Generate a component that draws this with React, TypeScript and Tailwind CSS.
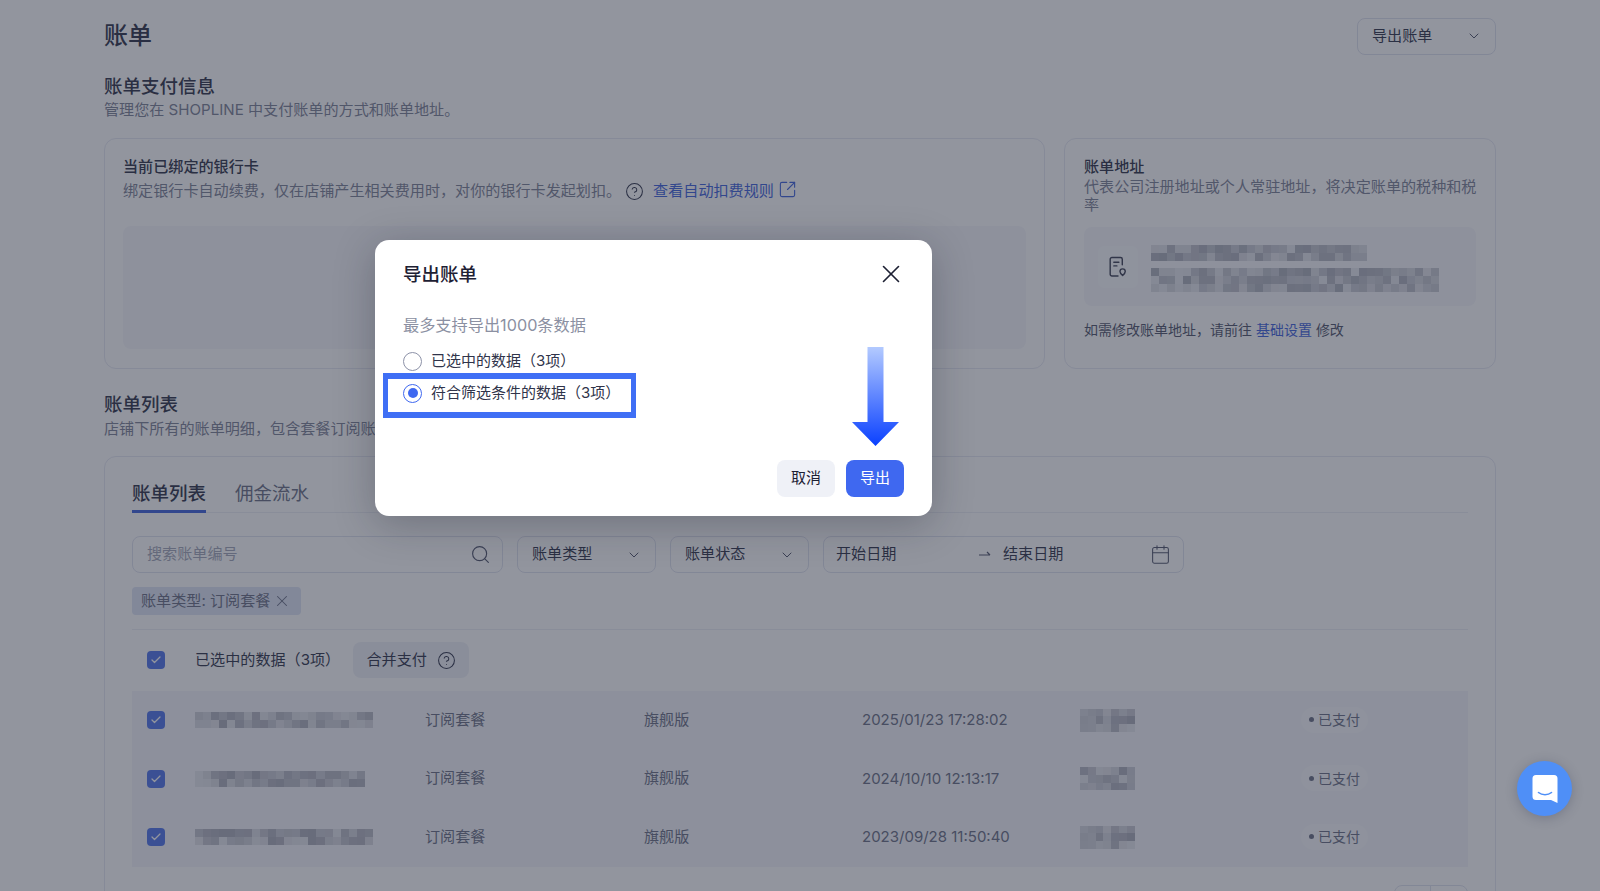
import React from "react";
import { Calendar, Check, ChevronDown, CircleHelp, Search, SquareArrowOutUpRight, X } from "lucide-react";

const rows = [
  { date: "2025/01/23 17:28:02", w: 22, seed: 3, amount: 9 },
  { date: "2024/10/10 12:13:17", w: 21, seed: 11, amount: 4 },
  { date: "2023/09/28 11:50:40", w: 22, seed: 17, amount: 9 },
];

// 打码区块：用固定种子生成马赛克，每次渲染结果一致
function Mosaic({ cols, lines, seed, cell = 8 }: { cols: number; lines: number; seed: number; cell?: number }) {
  const cells = Array.from({ length: cols * lines }, (_, i) => {
    const n = Math.sin((i + 1) * 12.9898 + seed * 78.233) * 43758.5453;
    return n - Math.floor(n);
  });
  return (
    <div className="grid blur-[0.6px]" style={{ gridTemplateColumns: `repeat(${cols}, ${cell}px)`, gridAutoRows: `${cell}px` }}>
      {cells.map((v, i) => (
        <div key={i} style={{ backgroundColor: `rgba(60,64,86,${(0.08 + v * 0.32).toFixed(2)})` }} />
      ))}
    </div>
  );
}

function Select({ label, className }: { label: string; className: string }) {
  return (
    <div className={`flex h-[37px] items-center justify-between rounded-lg border border-[#dfe2ee] pl-[14px] pr-[13px] text-[15.1px] text-[#30344a] ${className}`}>
      <span>{label}</span>
      <ChevronDown size={16} strokeWidth={1.5} className="text-[#50556b]" />
    </div>
  );
}

function CheckBox() {
  return (
    <div className="flex h-[18px] w-[18px] items-center justify-center rounded-[4px] bg-[#5075ea]">
      <Check size={12} strokeWidth={2.5} className="text-white" />
    </div>
  );
}

function ReceiptPinIcon() {
  return (
    <svg width="20" height="22" viewBox="0 0 18 20" fill="none" stroke="#3d4154" strokeWidth="1.3" strokeLinecap="round" strokeLinejoin="round">
      <path d="M9 18.200H3.500a1.600 1.600 0 0 1-1.600-1.600V3a1.600 1.600 0 0 1 1.600-1.600h7.800a1.600 1.600 0 0 1 1.600 1.600v5" />
      <path d="M5.200 5.600h4.600M5.200 9h2.800" />
      <path d="M13.200 17.800c-1.500-1.400-2.400-2.600-2.400-3.700a2.400 2.400 0 0 1 4.800 0c0 1.100-.9 2.300-2.400 3.700Z" />
    </svg>
  );
}

function ChatBubble() {
  return (
    <div className="absolute left-[1517px] top-[761px] flex h-[55px] w-[55px] items-center justify-center rounded-full bg-[#4f8ff7] shadow-[0_2px_12px_rgba(30,40,70,0.25)]">
      <svg width="26" height="30" viewBox="0 0 26 30">
        <path d="M4 1h18a3.500 3.500 0 0 1 3.500 3.500V29l-6.500-3H4A3.500 3.500 0 0 1 .5 22.500V4.500A3.500 3.500 0 0 1 4 1Z" fill="#fff" />
        <path d="M6.500 18.500c3.600 3 9.400 3 13 0" fill="none" stroke="#4f8ff7" strokeWidth="1.600" strokeLinecap="round" />
      </svg>
    </div>
  );
}

function ExportDialog() {
  return (
    <div className="relative flex h-[276px] w-[557px] flex-col rounded-[14px] bg-white px-[28px] shadow-[0_8px_40px_rgba(20,24,40,0.28)]">
      <div className="mt-[22px] flex h-[26px] items-center justify-between">
        <span className="text-[18.5px] font-medium text-[#1d2033]">导出账单</span>
        <X size={30} strokeWidth={1.3} className="mr-[-2px] -translate-y-[1px] text-[#1d2033]" />
      </div>
      <p className="mt-[25px] text-[16.200px] leading-[24px] text-[#8b90a2]">最多支持导出1000条数据</p>
      <div className="mt-[13px] flex flex-col gap-[10px] text-[15px] text-[#30344a]">
        <label className="flex h-[22px] items-center gap-[9px]">
          <span className="h-[19px] w-[19px] rounded-full border-[1.5px] border-[#8d92a8]" />
          已选中的数据（3项）
        </label>
        <label className="relative flex h-[22px] items-center gap-[9px]">
          <span className="flex h-[19px] w-[19px] items-center justify-center rounded-full border-[1.5px] border-[#3f68f0]">
            <span className="h-[10px] w-[10px] rounded-full bg-[#3f68f0]" />
          </span>
          符合筛选条件的数据（3项）
          {/* 教程截图上的高亮框 */}
          <span className="absolute left-[-20px] top-[-9px] h-[45px] w-[253px] border-x-[5px] border-y-[6px] border-[#3f6ff5]" />
        </label>
      </div>
      {/* 指向导出按钮的箭头 */}
      <svg className="absolute left-[477px] top-[107px]" width="47" height="99" viewBox="0 0 47 99">
        <defs>
          <linearGradient id="arrowFill" x1="0" y1="0" x2="0" y2="1">
            <stop offset="0" stopColor="#b3caff" />
            <stop offset="1" stopColor="#0a40ff" />
          </linearGradient>
        </defs>
        <path d="M15.500 0h16v75H47L23.500 99 0 75h15.500Z" fill="url(#arrowFill)" />
      </svg>
      <div className="mt-auto mb-[19px] flex justify-end gap-[11px] text-[15px]">
        <button className="h-[37px] w-[58px] rounded-lg bg-[#eff1f7] text-[#1d2033]">取消</button>
        <button className="h-[37px] w-[58px] rounded-lg bg-[#3f68f0] text-white">导出</button>
      </div>
    </div>
  );
}

export default function App() {
  return (
    <div className="relative h-[891px] w-[1600px] overflow-hidden bg-white font-[Inter,'Noto_Sans_CJK_SC',sans-serif] text-[15.1px] text-[#30344a]">
      <div className="px-[104px]">
        <div className="flex h-[71px] items-center justify-between pt-[1px]">
          <h1 className="text-[24px] font-medium text-[#2f3348]">账单</h1>
          <Select label="导出账单" className="w-[139px]" />
        </div>

        <h2 className="mt-[3px] text-[18.500px] font-medium leading-[24px] text-[#2f3348]">账单支付信息</h2>
        <p className="mt-[1px] leading-[22px] text-[#7d8296]">管理您在 SHOPLINE 中支付账单的方式和账单地址。</p>

        <div className="mt-[17px] flex h-[231px] gap-[19px]">
          <section className="flex w-[941px] flex-col rounded-xl border border-[#e6e8f2] px-[18px] pt-[17px]">
            <h3 className="font-medium leading-[22px] text-[#2f3348]">当前已绑定的银行卡</h3>
            <div className="mt-[2px] flex h-[22px] items-center text-[#7d8296]">
              绑定银行卡自动续费，仅在店铺产生相关费用时，对你的银行卡发起划扣。
              <CircleHelp size={19} strokeWidth={1.3} className="ml-[4px] text-[#30344a]" />
              <span className="ml-[9px] text-[#3e63dc]">查看自动扣费规则</span>
              <SquareArrowOutUpRight size={19} strokeWidth={1.4} className="ml-[4px] -translate-y-[2px] text-[#3e63dc]" />
            </div>
            <div className="mt-[24px] h-[123px] rounded-lg bg-[#f6f7fb]" />
          </section>

          <section className="flex w-[432px] flex-col rounded-xl border border-[#e6e8f2] pl-[19px] pr-[16px] pt-[17px]">
            <h3 className="font-medium leading-[22px] text-[#2f3348]">账单地址</h3>
            <p className="leading-[18px] text-[#7d8296]">代表公司注册地址或个人常驻地址，将决定账单的税种和税率</p>
            <div className="mt-[13px] flex h-[79px] w-[392px] items-center gap-[13px] rounded-lg bg-[#f6f7fb] pl-[14px]">
              <div className="flex h-[42px] w-[40px] items-center justify-center rounded-md bg-[#f9fafd]">
                <ReceiptPinIcon />
              </div>
              <div className="mt-[4px] flex flex-col gap-[7px]">
                <Mosaic cols={27} lines={2} seed={5} />
                <Mosaic cols={36} lines={3} seed={8} />
              </div>
            </div>
            <p className="mt-[13px] text-[14px] leading-[22px] text-[#50556b]">
              如需修改账单地址，请前往 <span className="text-[#3e63dc]">基础设置</span> 修改
            </p>
          </section>
        </div>

        <h2 className="mt-[23px] text-[18.500px] font-medium leading-[24px] text-[#2f3348]">账单列表</h2>
        <p className="mt-[2px] leading-[22px] text-[#7d8296]">店铺下所有的账单明细，包含套餐订阅账单和佣金账单。</p>

        <section className="mt-[16px] h-[520px] rounded-xl border border-[#e6e8f2] px-[27px]">
          <div className="flex h-[56px] items-start gap-[29px] border-b border-[#eceef5] pt-[23px] text-[18.500px] leading-[28px]">
            <div className="flex h-[33px] flex-col justify-between">
              <span className="-mt-[1px] font-medium text-[#2f3348]">账单列表</span>
              <span className="h-[3px] bg-[#3e63dc]" />
            </div>
            <span className="-mt-[1px] text-[#6a6f85]">佣金流水</span>
          </div>

          <div className="mt-[23px] flex gap-[14px]">
            <div className="flex h-[37px] w-[371px] items-center justify-between rounded-lg border border-[#dfe2ee] pl-[14px] pr-[11px] text-[#a3a7b8]">
              <span>搜索账单编号</span>
              <Search size={21} strokeWidth={1.3} className="text-[#50556b]" />
            </div>
            <Select label="账单类型" className="w-[139px]" />
            <Select label="账单状态" className="w-[139px]" />
            <div className="flex h-[37px] w-[361px] items-center rounded-lg border border-[#dfe2ee] pl-[12px] pr-[12px]">
              <span className="w-[143px]">开始日期</span>
              <svg width="12" height="8" viewBox="0 0 12 8" fill="none" stroke="#50556b" strokeWidth="1.2" className="-translate-y-[1px]">
                <path d="M0 5h11M8 2l3 3" />
              </svg>
              <span className="ml-[12px]">结束日期</span>
              <Calendar size={21} strokeWidth={1.2} className="ml-auto text-[#50556b]" />
            </div>
          </div>

          <div className="mt-[14px] flex h-[28px] w-[169px] items-center gap-[3px] rounded bg-[#dee4f5] pl-[9px] text-[#6a6f85]">
            账单类型: 订阅套餐
            <X size={18} strokeWidth={1.4} />
          </div>
          <div className="mt-[14px] border-t border-[#eceef5]" />

          <div className="mt-[12px] flex h-[36px] items-center pl-[15px]">
            <CheckBox />
            <span className="ml-[30px]">已选中的数据（3项）</span>
            <div className="ml-[13px] flex h-[36px] w-[116px] items-center justify-center gap-[10px] rounded-lg bg-[#eff1f7]">
              合并支付
              <CircleHelp size={19} strokeWidth={1.3} />
            </div>
          </div>

          <div className="mt-[13px] flex flex-col bg-[#f4f5fa]">
            {rows.map((r) => (
              <div key={r.date} className="grid h-[58.5px] grid-cols-[48px_230px_219px_218px_218px_221px_1fr] items-center pl-[15px] text-[#6a6f85]">
                <CheckBox />
                <Mosaic cols={r.w} lines={2} seed={r.seed} cell={8.1} />
                <span>订阅套餐</span>
                <span>旗舰版</span>
                <span className="text-[15px]">{r.date}</span>
                <Mosaic cols={7} lines={3} seed={r.amount} cell={7.800} />
                <span className="-mt-[1px] flex h-[26px] w-[67px] items-center justify-center gap-[4px] rounded-full bg-[#f8f9fc] text-[14px]">
                  <span className="h-[5px] w-[5px] rounded-full bg-[#6a6f85]" />
                  已支付
                </span>
              </div>
            ))}
          </div>

          <div className="mt-[18px] ml-auto flex h-[37px] w-[74px] rounded-lg border border-[#dfe2ee]">
            <div className="w-1/2 border-r border-[#dfe2ee]" />
          </div>
        </section>
      </div>

      {/* 遮罩层与弹窗 */}
      <div className="absolute inset-0 bg-[rgba(37,43,61,0.5)] pl-[375px] pt-[240px]">
        <ExportDialog />
      </div>
      <ChatBubble />
    </div>
  );
}
